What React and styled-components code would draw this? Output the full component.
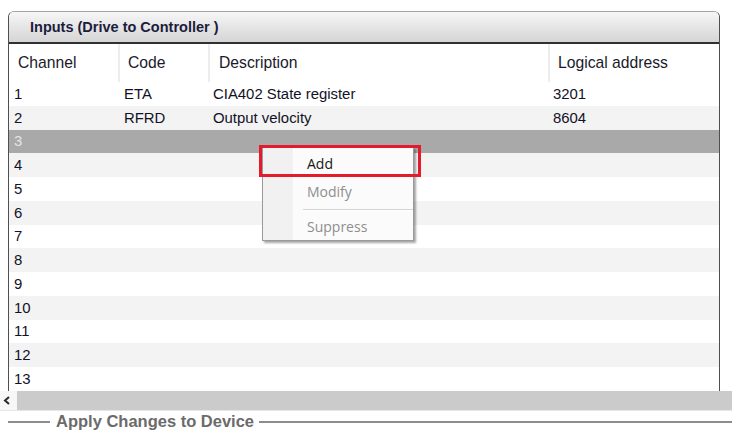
import React from "react";
import styled, { createGlobalStyle } from "styled-components";

const GlobalStyle = createGlobalStyle`
  html, body { margin: 0; padding: 0; background: #ffffff; }
  body { font-family: "Liberation Sans", Arial, sans-serif; }
`;

const Page = styled.div`
  position: relative;
  width: 732px;
  height: 432px;
  overflow: hidden;
  background: #ffffff;
  display: flex;
  flex-direction: column;
`;

const Panel = styled.section`
  margin: 11px 12px 0 8px;
  height: 380px;
  box-sizing: border-box;
  border: 1px solid #4f4f4f;
  border-top-color: #a3a3a3;
  border-bottom: none;
  border-radius: 6px 6px 0 0;
  overflow: hidden;
  display: flex;
  flex-direction: column;
`;

const PanelHeader = styled.header`
  height: 30px;
  flex: none;
  display: flex;
  align-items: center;
  padding-left: 21px;
  background: linear-gradient(#f6f6f6, #d5d5d5);
  border-bottom: 2px solid #303030;
  font-weight: bold;
  font-size: 14.5px;
  color: #1c1c3c;
`;

const COLS = "109px 90px 340px 1fr";

const HeadRow = styled.div`
  display: grid;
  grid-template-columns: ${COLS};
  height: 38px;
  flex: none;
  background: #ffffff;
`;

const HeadCell = styled.div`
  display: flex;
  align-items: center;
  padding-left: ${(p) => p.$pad}px;
  font-size: 15.7px;
  color: #1a1a2a;
  border-left: ${(p) => (p.$first ? "none" : "2px solid #ededed")};
`;

const Row = styled.div`
  display: grid;
  grid-template-columns: ${COLS};
  height: 23.75px;
  flex: none;
  background: ${(p) => (p.$selected ? "#a9a9a9" : p.$alt ? "#f3f3f3" : "#ffffff")};
  color: ${(p) => (p.$selected ? "#e4e4e4" : "#121226")};
  font-size: 14.9px;
`;

const Cell = styled.div`
  display: flex;
  align-items: center;
  padding-left: ${(p) => p.$pad}px;
  white-space: nowrap;
`;

const ScrollBar = styled.div`
  height: 19px;
  flex: none;
  display: flex;
  border-bottom: 1px solid #e6e6e6;
`;

const ScrollArrow = styled.div`
  width: 17px;
  display: flex;
  align-items: center;
  padding-left: 3px;
  box-sizing: border-box;
  background: #f7f7f7;
`;

const ScrollTrack = styled.div`
  flex: 1;
  background: #cbcbcb;
`;

const Legend = styled.div`
  flex: 1;
  display: flex;
  align-items: center;
  padding: 0 0 0 8px;
`;

const LegendLine = styled.div`
  height: 2px;
  background: #8c8c8c;
  width: ${(p) => (p.$grow ? "auto" : "42px")};
  flex: ${(p) => (p.$grow ? 1 : "none")};
`;

const LegendText = styled.span`
  margin: 0 5px 0 6px;
  font-weight: bold;
  font-size: 16.5px;
  color: #6b6b6b;
`;

const Menu = styled.div`
  position: absolute;
  left: 262px;
  top: 147px;
  width: 152px;
  height: 94px;
  box-sizing: border-box;
  border: 1px solid #9a9a9a;
  background: linear-gradient(90deg, #f1f1f1 0, #f1f1f1 30px, #ffffff 30px, #fbfbfb 31px);
  box-shadow: 2px 2px 2px rgba(0, 0, 0, 0.35);
  padding-top: 1px;
  font-family: "Open Sans", "Noto Sans", sans-serif;
  font-size: 14px;
`;

const MenuItem = styled.div`
  height: 28px;
  display: flex;
  align-items: center;
  padding-left: 44px;
  color: ${(p) => (p.$disabled ? "#8e8e8e" : "#161616")};
`;

const MenuSeparator = styled.div`
  height: 1px;
  margin: 4px 0 1px 40px;
  background: #d4d4d4;
  border-bottom: 1px solid #ffffff;
`;

const Highlight = styled.div`
  position: absolute;
  left: 259px;
  top: 145px;
  width: 162px;
  height: 32px;
  box-sizing: border-box;
  border: 3px solid #e31b2c;
`;

const rows = [
  { ch: "1", code: "ETA", desc: "CIA402 State register", addr: "3201" },
  { ch: "2", code: "RFRD", desc: "Output velocity", addr: "8604" },
  ...Array.from({ length: 11 }, (_, i) => ({ ch: String(i + 3), code: "", desc: "", addr: "" })),
];

export default function App() {
  return (
    <Page>
      <GlobalStyle />
      <Panel>
        <PanelHeader>Inputs (Drive to Controller )</PanelHeader>
        <HeadRow>
          <HeadCell $first $pad={9}>Channel</HeadCell>
          <HeadCell $pad={8}>Code</HeadCell>
          <HeadCell $pad={9}>Description</HeadCell>
          <HeadCell $pad={8}>Logical address</HeadCell>
        </HeadRow>
        {rows.map((r, i) => (
          <Row key={r.ch} $alt={i % 2 === 1} $selected={r.ch === "3"}>
            <Cell $pad={5}>{r.ch}</Cell>
            <Cell $pad={6}>{r.code}</Cell>
            <Cell $pad={5}>{r.desc}</Cell>
            <Cell $pad={5}>{r.addr}</Cell>
          </Row>
        ))}
      </Panel>
      <ScrollBar>
        <ScrollArrow>
          <svg width="8" height="9" viewBox="0 0 8 9">
            <path d="M6 1 L2 4.5 L6 8" fill="none" stroke="#2a2a2a" strokeWidth="2" />
          </svg>
        </ScrollArrow>
        <ScrollTrack />
      </ScrollBar>
      <Legend>
        <LegendLine />
        <LegendText>Apply Changes to Device</LegendText>
        <LegendLine $grow />
      </Legend>
      <Menu>
        <MenuItem>Add</MenuItem>
        <MenuItem $disabled>Modify</MenuItem>
        <MenuSeparator />
        <MenuItem $disabled>Suppress</MenuItem>
      </Menu>
      <Highlight />
    </Page>
  );
}
